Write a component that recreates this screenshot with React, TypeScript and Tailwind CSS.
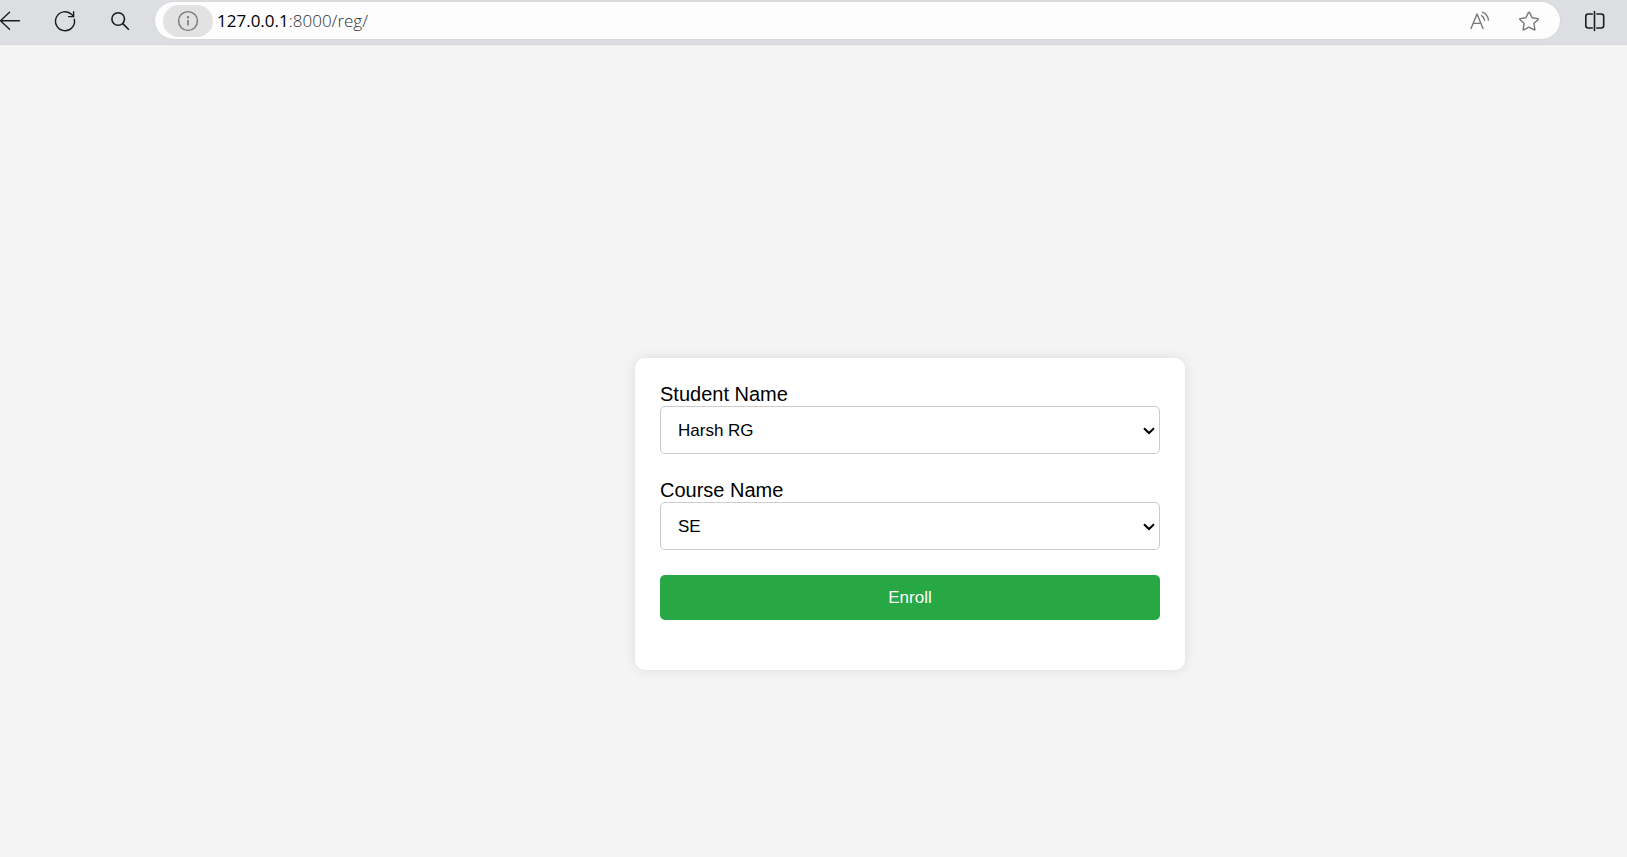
import type { ReactNode } from "react";

function Icon({ children, className = "" }: { children: ReactNode; className?: string }) {
  return (
    <svg
      viewBox="0 0 20 20"
      className={`block h-5 w-5 overflow-visible ${className}`}
      fill="none"
      stroke="currentColor"
      strokeWidth="1.4"
      strokeLinecap="round"
      strokeLinejoin="round"
      aria-hidden="true"
    >
      {children}
    </svg>
  );
}

function Toolbar() {
  return (
    <header className="flex h-[45px] items-start border-b border-[#d6d7d9] bg-[#dddee2] pt-[2px] pr-[22px] text-[#1b1c1f]">
      <nav className="flex h-[37px] items-center gap-[35px]" aria-label="Browser">
        <button type="button" aria-label="Back">
          <Icon>
            <path d="M19.5 9.8H0.5M9.5 1.3L0.5 9.8l9 8.5" />
          </Icon>
        </button>
        <button type="button" aria-label="Refresh">
          <Icon>
            <path d="M19.3 8.3A9.5 9.5 0 1 1 16.8 3.6L18.6 5.5" />
            <path d="M18.6 0.6v5h-5" />
          </Icon>
        </button>
        <button type="button" aria-label="Search">
          <Icon>
            <circle cx="8.2" cy="8" r="6.3" strokeWidth="1.6" />
            <path d="M12.8 12.6l5.6 5.7" strokeWidth="1.6" />
          </Icon>
        </button>
      </nav>

      <div className="ml-[25px] flex h-[37px] grow items-center rounded-full bg-[#fdfdfd] pr-[21px] pl-2 text-[#77787a] shadow-[0_0_2px_rgba(0,0,0,0.08)]">
        <button
          type="button"
          aria-label="Site information"
          className="flex h-8 w-[50px] items-center justify-center rounded-full bg-[#e2e2e2]"
        >
          <Icon>
            <circle cx="10" cy="10" r="9.4" />
            <path d="M10 9v5.4" strokeLinecap="butt" strokeWidth="1.6" />
            <circle cx="10" cy="6.2" r="0.5" />
          </Icon>
        </button>
        <p className="ml-1 grow font-['Open_Sans','Noto_Sans',sans-serif] text-[17px] leading-6 font-light text-[#2f3032]">
          <span className="font-normal text-black">127.0.0.1</span>:8000/reg/
        </p>
        <div className="flex items-center gap-[29px]">
          <button type="button" aria-label="Read aloud">
            <Icon>
              <path d="M1 17.5L7 3l6 14.5M3.2 12.4h7.6" strokeWidth="1.4" />
              <path d="M11.6 4.6q2.5 1.4 2.9 4.6M12.6 1.2q5.2 2.6 5.9 7.8" strokeWidth="1.4" />
            </Icon>
          </button>
          <button type="button" aria-label="Add to favorites">
            <Icon>
              <path d="M10 1.2q.4 0 .6.4l2.5 5.2 5.7.8q.9.2.3.9l-4.2 4.1 1 5.7q.1.9-.7.5L10 16.1l-5.2 2.7q-.8.4-.7-.5l1-5.7L.9 8.5q-.6-.7.3-.9l5.7-.8 2.5-5.2q.2-.4.6-.4z" />
            </Icon>
          </button>
        </div>
      </div>

      <button type="button" aria-label="Split screen" className="ml-[25px] flex h-[37px] items-center">
        <Icon>
          <path d="M7.3 3H3.2Q.8 3 .8 5.4v9.2Q.8 17 3.2 17h4.1M11.9 3h4.4q2.4 0 2.4 2.4v9.2q0 2.4-2.4 2.4h-4.4M9.5.6v18.8" strokeWidth="1.6" />
        </Icon>
      </button>
    </header>
  );
}

function SelectField({ id, label, options }: { id: string; label: string; options: string[] }) {
  return (
    <div className="mb-[25px]">
      <label htmlFor={id} className="block text-[20px] leading-[23px]">
        {label}
      </label>
      <div className="relative">
        <select
          id={id}
          name={id}
          className="block h-12 w-full appearance-none rounded-[5px] border border-[#cccccc] bg-white pt-px pr-6 pl-[17px] text-[17px] text-black"
        >
          {options.map((option) => (
            <option key={option}>{option}</option>
          ))}
        </select>
        <svg
          viewBox="0 0 12 8"
          className="pointer-events-none absolute top-[21px] right-[5px] h-2 w-3"
          fill="none"
          stroke="black"
          strokeWidth="2"
          aria-hidden="true"
        >
          <path d="M1 1.2l5 4.8 5-4.8" />
        </svg>
      </div>
    </div>
  );
}

export default function App() {
  return (
    <div className="flex min-h-screen flex-col bg-[#f4f4f4] font-['Liberation_Sans',Arial,sans-serif] text-black">
      <Toolbar />
      <main className="flex grow items-center justify-center pt-[126px] pl-[193px]">
        <form
          className="w-full max-w-[550px] rounded-[10px] bg-white p-[25px] shadow-[0_0_12px_rgba(0,0,0,0.1)]"
          onSubmit={(event) => event.preventDefault()}
        >
          <SelectField id="student" label="Student Name" options={["Harsh RG"]} />
          <SelectField id="course" label="Course Name" options={["SE"]} />
          <button
            type="submit"
            className="mb-[25px] block h-[45px] w-full rounded-[5px] bg-[#28a745] text-[17px] text-white"
          >
            Enroll
          </button>
        </form>
      </main>
    </div>
  );
}
